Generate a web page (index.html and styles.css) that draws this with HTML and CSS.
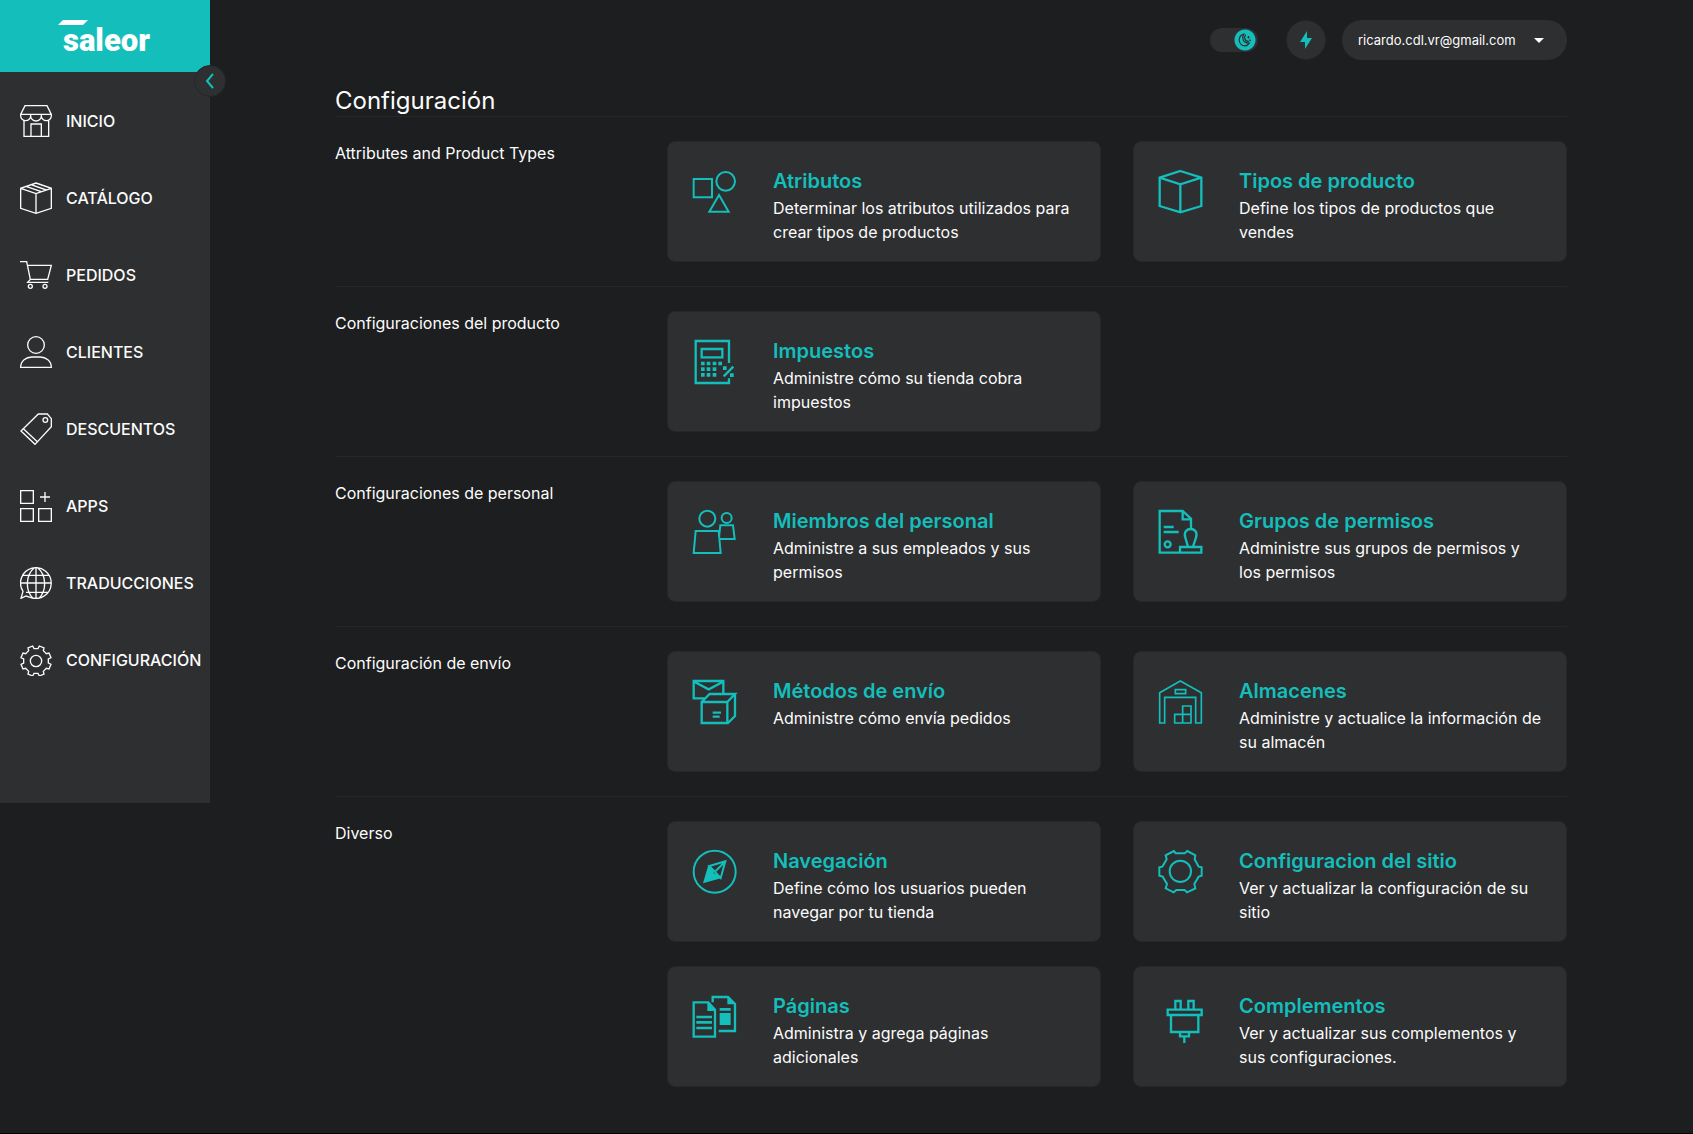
FILE: index.html
```html
<!DOCTYPE html>
<html lang="es">
<head>
<meta charset="utf-8">
<meta name="viewport" content="width=device-width, initial-scale=1">
<title>Configuración</title>
<link rel="stylesheet" href="styles.css">
</head>
<body>
<div class="app">
  <aside class="sidebar">
    <a class="logo" href="#" aria-label="saleor">
      <svg class="logo-mark" viewBox="0 0 90 16" aria-hidden="true"><path d="M5 0H30L25 5H0Z"/></svg>
      <span class="logo-text">saleor</span>
    </a>
    <button class="collapse" type="button" aria-label="Contraer menú">
      <svg width="10" height="16" viewBox="0 0 10 16"><path d="M8 1L2 8L8 15"/></svg>
    </button>
    <nav class="nav">
      <a class="nav-item" href="#"><svg class="nav-icon" viewBox="0 0 96 96"><path d="M2 28L15 2H81L94 28ZM2 28V33A15 14 0 0 0 32 33V28M32 33A15 14 0 0 0 64 33V28M64 33A15 14 0 0 0 94 33V28M12 46V94H86V46M33 94V57H64V94"/></svg>INICIO</a>
      <a class="nav-item" href="#"><svg class="nav-icon" viewBox="0 0 96 96"><path d="M48 3L94 19V79L48 94L2 79V19ZM2 19L48 35L94 19M48 35V94M33 8L79 24M18 13L64 29"/></svg>CATÁLOGO</a>
      <a class="nav-item" href="#"><svg class="nav-icon" viewBox="0 0 96 96"><path d="M0 8H20L31 61H83L94 19H22M31 61L23 70H85"/><circle cx="31" cy="82" r="6"/><circle cx="75" cy="82" r="6"/></svg>PEDIDOS</a>
      <a class="nav-item" href="#"><svg class="nav-icon" viewBox="0 0 96 96"><circle cx="48" cy="27" r="25"/><path d="M2 94C2 74 18 63 36 63H60C78 63 94 74 94 94Z"/></svg>CLIENTES</a>
      <a class="nav-item" href="#"><svg class="nav-icon" viewBox="0 0 96 96"><path d="M55 3H82L94 17V41L45 94L3 54ZM10 47L52 86"/><circle cx="76" cy="21" r="7"/></svg>DESCUENTOS</a>
      <a class="nav-item" href="#"><svg class="nav-icon" viewBox="0 0 96 96"><path d="M2 2H40V40H2ZM2 56H40V94H2ZM56 56H94V94H56ZM75 6V36M60 21H90"/></svg>APPS</a>
      <a class="nav-item" href="#"><svg class="nav-icon" viewBox="0 0 96 96"><path d="M31 91A46 46 0 1 0 9 73L3 94L18 87ZM48 2V94M2 48H94M11 25H85M18 76H85M43 2C16 24 16 70 38 93M53 2C80 24 80 70 58 93"/></svg>TRADUCCIONES</a>
      <a class="nav-item" href="#"><svg class="nav-icon" viewBox="0 0 96 96"><g transform="translate(48 51)"><path d="M37 6L45 10L39 24L31 22L22 31L24 39L10 45L6 37H-6L-10 45L-24 39L-22 31L-31 22L-39 24L-45 10L-37 6V-6L-45 -10L-39 -24L-31 -22L-22 -31L-24 -39L-10 -45L-6 -37H6L10 -45L24 -39L22 -31L31 -22L39 -24L45 -10L37 -6Z"/><circle r="17"/></g></svg>CONFIGURACIÓN</a>
    </nav>
  </aside>

  <main class="main">
    <div class="container">
      <header class="topbar">
        <label class="theme">
          <input class="theme-switch" type="checkbox" aria-label="Tema oscuro" checked>
          <svg class="theme-icon" viewBox="0 0 36 36"><path d="M15 3C9 12 12 27 29 26C26 31 22 33 18 33C9 33 3 26 3 18C3 11 8 5 15 3Z"/><path d="M20 4C14 11 17 22 28 22M27 8V14M24 11H30M31 17V21M29 19H33"/></svg>
        </label>
        <button class="bolt" type="button" aria-label="Navegador">
          <svg width="12" height="18" viewBox="0 0 12 18"><path d="M7 0L0 11H5V18L12 7H7Z"/></svg>
        </button>
        <button class="user" type="button">ricardo.cdl.vr@gmail.com
          <svg width="10" height="5" viewBox="0 0 10 5"><path d="M0 0H10L5 5Z"/></svg>
        </button>
      </header>

      <h1 class="title">Configuración</h1>

      <section class="section">
        <h2 class="section-name">Attributes and Product Types</h2>
        <div class="cards">
          <a class="card" href="#">
            <svg class="card-icon" viewBox="0 0 144 144"><path d="M5 39H60V94H5ZM81 87L52 137H110Z"/><circle cx="101" cy="46" r="28"/></svg>
            <div><h3 class="card-title">Atributos</h3><p class="card-text">Determinar los atributos utilizados para crear tipos de productos</p></div>
          </a>
          <a class="card" href="#">
            <svg class="card-icon bold" viewBox="0 0 144 144"><path d="M67 15L130 35V120L67 139L5 120V35ZM5 35L67 55L130 35M67 55V139"/></svg>
            <div><h3 class="card-title">Tipos de producto</h3><p class="card-text">Define los tipos de productos que vendes</p></div>
          </a>
        </div>
      </section>

      <section class="section">
        <h2 class="section-name">Configuraciones del producto</h2>
        <div class="cards">
          <a class="card" href="#">
            <svg class="card-icon bold" viewBox="0 0 144 144"><path d="M111 81V15H11V141H111V127M29 39H91V64H29ZM95 121L124 92"/><path class="solid" d="M27 77h11v11h-11zM44 77h11v11h-11zM62 77h11v11h-11zM79 77h11v11h-11zM27 94h11v11h-11zM44 94h11v11h-11zM62 94h11v11h-11zM27 111h11v11h-11zM44 111h11v11h-11zM62 111h11v11h-11zM93 91h11v11h-11zM114 112h11v11h-11z"/></svg>
            <div><h3 class="card-title">Impuestos</h3><p class="card-text">Administre cómo su tienda cobra impuestos</p></div>
          </a>
        </div>
      </section>

      <section class="section">
        <h2 class="section-name">Configuraciones de personal</h2>
        <div class="cards">
          <a class="card" href="#">
            <svg class="card-icon" viewBox="0 0 144 144"><circle cx="46" cy="38" r="24"/><circle cx="104" cy="36" r="15"/><path d="M11 75H80L86 141H5ZM81 94L85 58H123L128 99H83"/></svg>
            <div><h3 class="card-title">Miembros del personal</h3><p class="card-text">Administre a sus empleados y sus permisos</p></div>
          </a>
          <a class="card" href="#">
            <svg class="card-icon bold" viewBox="0 0 144 144"><path d="M99 68V38L74 15H5V140H65M74 15V40H99M17 63H47M17 78H62M66 123H130V140H66ZM90 122L82 95C76 76 88 69 98 69C108 69 120 76 114 95L105 122"/><circle cx="29" cy="115" r="9"/></svg>
            <div><h3 class="card-title">Grupos de permisos</h3><p class="card-text">Administre sus grupos de permisos y los permisos</p></div>
          </a>
        </div>
      </section>

      <section class="section">
        <h2 class="section-name">Configuración de envío</h2>
        <div class="cards">
          <a class="card" href="#">
            <svg class="card-icon bold" viewBox="0 0 144 144"><path d="M38 67H5V15H94V52M8 18L50 40L92 18M29 78H106V141H29ZM29 78L53 54H129L106 78M129 54V120L108 141M62 110H87M62 122H83"/></svg>
            <div><h3 class="card-title">Métodos de envío</h3><p class="card-text">Administre cómo envía pedidos</p></div>
          </a>
          <a class="card" href="#">
            <svg class="card-icon thin" viewBox="0 0 144 144"><path d="M5 141V50L67 15L130 50V141H113V64H20V141ZM52 41H83V53H52ZM50 115H99V141H50ZM74 90H99V141H74Z"/></svg>
            <div><h3 class="card-title">Almacenes</h3><p class="card-text">Administre y actualice la información de su almacén</p></div>
          </a>
        </div>
      </section>

      <section class="section">
        <h2 class="section-name">Diverso</h2>
        <div class="cards">
          <a class="card" href="#">
            <svg class="card-icon" viewBox="0 0 144 144"><circle cx="68" cy="77" r="63"/><path d="M100 46L52 60L86 96ZM100 46L71 75"/><path class="solid" d="M33 112L49 57L66 72A7 7 0 0 0 74 83L87 97Z"/></svg>
            <div><h3 class="card-title">Navegación</h3><p class="card-text">Define cómo los usuarios pueden navegar por tu tienda</p></div>
          </a>
          <a class="card" href="#">
            <svg class="card-icon" viewBox="0 0 144 144"><path d="M48 15L23 28L26 40L13 62L4 64V89L14 92L27 114L23 127L47 139L55 132H80L87 139L112 127L109 114L122 92L131 89V64L122 62L110 40L112 28L88 15L80 22H53Z"/><circle cx="67" cy="76" r="32"/></svg>
            <div><h3 class="card-title">Configuracion del sitio</h3><p class="card-text">Ver y actualizar la configuración de su sitio</p></div>
          </a>
          <a class="card" href="#">
            <svg class="card-icon bold" viewBox="0 0 144 144"><path d="M5 34H49L69 56V137H5ZM62 34V18H108L129 39V120H80"/><path class="solid" d="M46 32V60H71ZM106 16V40H131ZM13 74H60V82H13ZM13 90H60V98H13ZM13 107H60V115H13ZM83 51H116V59H83ZM83 66H116V102H83Z"/></svg>
            <div><h3 class="card-title">Páginas</h3><p class="card-text">Administra y agrega páginas adicionales</p></div>
          </a>
          <a class="card" href="#">
            <svg class="card-icon bold" viewBox="0 0 144 144"><path d="M52 56V30H68V56M91 56V30H107V56M29 56H131V72H29ZM39 72H121V123H39ZM66 123H93V136H66ZM79 136V156"/></svg>
            <div><h3 class="card-title">Complementos</h3><p class="card-text">Ver y actualizar sus complementos y sus configuraciones.</p></div>
          </a>
        </div>
      </section>
    </div>
  </main>
</div>
</body>
</html>
```
FILE: styles.css
```css
:root {
  --bg: #1d1e1f;
  --paper: #2e2f31;
  --line: #252728;
  --teal: #13bebb;
  --text: #fcfcfc;
}

* {
  box-sizing: border-box;
}

body {
  margin: 0;
  background: var(--bg);
  color: var(--text);
  font: 400 16px/24px Inter, "Liberation Sans", sans-serif;
}

h1, h2, h3, p {
  margin: 0;
  font-weight: 400;
}

a {
  color: inherit;
  text-decoration: none;
}

button {
  border: 0;
  padding: 0;
  color: inherit;
  font: inherit;
  cursor: pointer;
}

.app {
  display: flex;
  align-items: flex-start;
  min-height: 100vh;
  border-bottom: 1px solid #000;
}

/* Sidebar */

.sidebar {
  position: relative;
  flex: 0 0 210px;
  background: var(--paper);
  padding-bottom: 127px;
}

.logo {
  position: relative;
  display: flex;
  height: 72px;
  padding: 21px 0 0 63px;
  background: var(--teal);
}

.logo-mark {
  position: absolute;
  top: 20px;
  left: 58px;
  width: 90px;
  height: 16px;
  fill: #fff;
}

.logo-text {
  color: #fff;
  font: 900 31px/40px Roboto, "Liberation Sans", sans-serif;
}

.collapse {
  position: absolute;
  top: 65px;
  right: -16px;
  display: grid;
  place-items: center;
  width: 32px;
  height: 32px;
  border: 1px solid var(--line);
  border-radius: 50%;
  background: var(--paper);
}

.collapse svg {
  fill: none;
  stroke: var(--teal);
  stroke-width: 2;
}

.nav {
  display: flex;
  flex-direction: column;
  gap: 45px;
  padding: 33px 0 0 20px;
}

.nav-item {
  display: flex;
  align-items: center;
  gap: 14px;
  height: 32px;
  font-weight: 500;
  white-space: nowrap;
}

.nav-icon {
  flex: none;
  width: 32px;
  height: 32px;
  fill: none;
  stroke: var(--text);
  stroke-width: 4;
}

/* Main */

.main {
  flex: 1;
  min-width: 0;
  padding-right: 1px;
}

.container {
  max-width: 1280px;
  margin: 0 auto;
  padding: 20px 24px 16px;
}

.topbar {
  display: flex;
  align-items: center;
  justify-content: flex-end;
  gap: 16px;
}

.theme {
  position: relative;
  display: flex;
  margin-right: 12px;
}

.theme-switch {
  appearance: none;
  width: 48px;
  height: 24px;
  margin: 0;
  border-radius: 12px;
  background: radial-gradient(circle at 35px 12px, var(--teal) 10px, transparent 11px) var(--paper);
}

.theme-icon {
  position: absolute;
  top: 5px;
  right: 6px;
  width: 14px;
  height: 14px;
  fill: none;
  stroke: var(--paper);
  stroke-width: 3;
}

.bolt {
  display: grid;
  place-items: center;
  width: 40px;
  height: 40px;
  border: 1px solid var(--line);
  border-radius: 50%;
  background: var(--paper);
}

.bolt svg {
  fill: var(--teal);
}

.user {
  display: flex;
  align-items: center;
  justify-content: space-between;
  width: 225px;
  height: 40px;
  padding: 0 23px 0 16px;
  border-radius: 20px;
  background: var(--paper);
  font-size: 13px;
}

.user svg {
  fill: var(--text);
}

.title {
  margin-top: 26px;
  font-size: 24px;
  line-height: 30px;
}

.section {
  display: grid;
  grid-template-columns: 300px 1fr;
  gap: 32px;
  padding: 24px 0;
  border-top: 1px solid var(--line);
}

.section-name {
  font-size: 16px;
}

.cards {
  display: grid;
  grid-template-columns: 1fr 1fr;
  gap: 24px 32px;
}

.card {
  display: grid;
  grid-template-columns: 48px 1fr;
  gap: 33px;
  min-height: 121px;
  padding: 24px 23px 17px 24px;
  border: 1px solid var(--line);
  border-radius: 8px;
  background: var(--paper);
}

.card-icon {
  width: 48px;
  height: 48px;
  overflow: visible;
  fill: none;
  stroke: var(--teal);
  stroke-width: 6;
}

.card-icon.bold {
  stroke-width: 7;
}

.card-icon.thin {
  stroke-width: 5;
}

.card-icon .solid {
  fill: var(--teal);
  stroke: none;
}

.card-title {
  color: var(--teal);
  font-size: 20px;
  font-weight: 600;
  line-height: 30px;
}
```
